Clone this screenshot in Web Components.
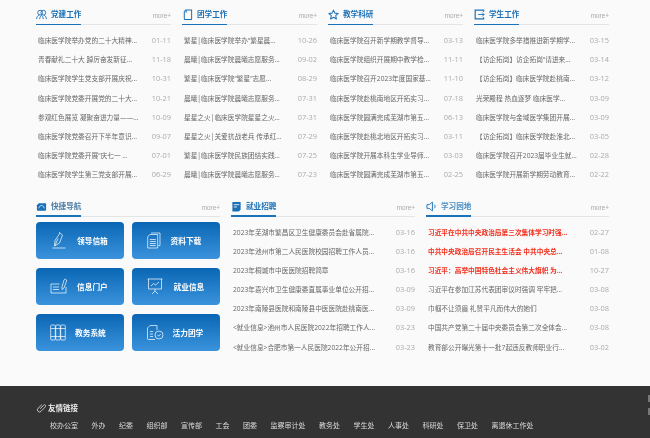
<!DOCTYPE html>
<html lang="zh"><head><meta charset="utf-8">
<style>
html,body{margin:0;padding:0;height:438px;overflow:hidden;background:#fafafa;font-family:"Open Sans","Noto Sans CJK SC",sans-serif}
body{display:flex;flex-direction:column;filter:blur(.3px)}
.top,.mid{display:grid;padding-left:36px}
.top{grid-template-columns:repeat(4,135px);column-gap:11px;padding-top:7px}
.mid{grid-template-columns:184px 184px 183px;column-gap:11px;margin-top:14px}
x-foot{margin-top:auto}
</style></head><body>
<template id="t-panel"><style>
:host{display:block}
.h{display:flex;align-items:flex-start;height:17px;border-bottom:1px solid #e3e5e8;position:relative;gap:4px}
.h::after{content:"";position:absolute;left:0;bottom:-1px;width:45px;height:1.4px;background:#1a73ba}
.ic{width:11px;height:11px;display:flex;flex:none;margin-top:2px}
.t{font-size:7.6px;font-weight:700;color:var(--tc,#1a70b6);line-height:14px;flex:1;white-space:nowrap}
.m{font:6.4px/8px "Liberation Sans",sans-serif;color:#aaa;margin-top:5px}
.b{padding-top:6px}
</style><div class="h"><span class="ic"><slot name="icon"></slot></span><span class="t"><slot name="title"></slot></span><span class="m">more+</span></div><div class="b"><slot></slot></div></template>

<template id="t-row"><style>
:host{display:flex;justify-content:space-between;height:19.2px;line-height:19.2px;padding:0 0 0 2px;font-size:6.7px;color:#666}
:host([red]){color:#f2301e;font-weight:700}
.x{white-space:nowrap;overflow:hidden}
.d{font:7.4px/19.2px "Open Sans",sans-serif;color:#aaa;font-weight:400}
</style><span class="x"><slot></slot></span><span class="d" id="d"></span></template>

<template id="t-tile"><style>
:host{display:flex;align-items:center;height:37px;box-sizing:border-box;border-radius:4px;background:linear-gradient(#0a66b4,#3b93dc);color:#fff;font:700 7.7px "Liberation Serif","Noto Sans CJK SC",serif;padding-left:var(--p);gap:var(--g)}
::slotted(svg){height:17px;flex:none}
</style><slot name="icon"></slot><span><slot></slot></span></template>

<template id="t-foot"><style>
:host{display:block;background:#333;height:52px;color:#ddd;box-sizing:border-box;overflow:hidden;position:relative}
.h{display:flex;align-items:center;gap:2px;padding:14px 0 0 36px;height:16px;font-size:7.5px;font-weight:700;line-height:16px;color:#eee}
.l{display:flex;gap:13.5px;padding:3px 0 0 50px;font-size:7px;line-height:14px;white-space:nowrap}
svg{width:10px;height:10px}
.e{position:absolute;right:0;width:2px;height:7px;background:#777}
</style><div class="h"><svg viewBox="0 0 12 12" fill="none" stroke="#ddd" stroke-width="1"><path d="M5 7 9.500 2.300a1.500 1.500 0 0 1 2 2L6 10a2.500 2.500 0 0 1-3.600-3.600L7 2"/></svg><slot name="title"></slot></div><div class="l"><slot></slot></div><i class="e" style="top:9px"></i><i class="e" style="top:22px"></i></template>

<script>
const def=(n,id)=>customElements.define(n,class extends HTMLElement{constructor(){super();this.attachShadow({mode:'open'}).append(document.getElementById(id).content.cloneNode(true));}connectedCallback(){const d=this.shadowRoot.getElementById('d');if(d)d.textContent=this.getAttribute('date')||'';}});
def('x-panel','t-panel');def('x-row','t-row');def('x-tile','t-tile');def('x-foot','t-foot');
customElements.define('x-grid',class extends HTMLElement{constructor(){super();this.attachShadow({mode:'open'}).innerHTML='<style>:host{display:grid;grid-template-columns:88px 88px;gap:9px 7.500px;margin-top:-1px}</style><slot></slot>';}});
</script>

<div class="top">
<x-panel><svg slot="icon" viewBox="0 0 12 12" fill="none" stroke="#1a70b6" stroke-width="1"><circle cx="4.500" cy="4" r="2.600"/><circle cx="8" cy="4" r="2.600"/><path d="M.6 11c.2-2.500 1.500-4 3-4.300M11.400 11c-.2-2.500-1.500-4-3-4.300M4 11c.2-2 1-3.500 2-4 1 .5 1.800 2 2 4"/></svg><span slot="title">党建工作</span>
<x-row date="01-11">临床医学院举办党的二十大精神...</x-row><x-row date="11-18">青春献礼二十大 踔厉奋发新征...</x-row><x-row date="10-31">临床医学院学生党支部开展庆祝...</x-row><x-row date="10-21">临床医学院党委开展党的二十大...</x-row><x-row date="10-09">参观红色展览 凝聚奋进力量——...</x-row><x-row date="09-07">临床医学院党委召开下半年意识...</x-row><x-row date="07-01">临床医学院党委开展“庆七一 ...</x-row><x-row date="06-29">临床医学院学生第三党支部开展...</x-row></x-panel>
<x-panel><svg slot="icon" viewBox="0 0 12 12" fill="none" stroke="#1a70b6" stroke-width="1.100"><path d="M2.500 2.500V10.500A1 1 0 0 0 3.500 11.500H9.500A1 1 0 0 0 10.500 10.500V1H4.500v3"/><path d="M2.500 2.500 4.500 1"/></svg><span slot="title">团学工作</span>
<x-row date="10-26">繁星|临床医学院举办“繁星晨...</x-row><x-row date="09-02">晨曦|临床医学院晨曦志愿服务...</x-row><x-row date="08-29">繁星|临床医学院“繁星”志愿...</x-row><x-row date="07-31">晨曦|临床医学院晨曦志愿服务...</x-row><x-row date="07-31">星星之火|临床医学院星星之火...</x-row><x-row date="07-29">星星之火|关爱抗战老兵 传承红...</x-row><x-row date="07-25">繁星|临床医学院民族团结实践...</x-row><x-row date="07-23">晨曦|临床医学院晨曦志愿服务...</x-row></x-panel>
<x-panel><svg slot="icon" viewBox="0 0 12 12" fill="none" stroke="#1a70b6" stroke-width="1.100" stroke-linejoin="round"><path d="M6 1.200 7.500 4.500l3.700.4-2.800 2.400.8 3.600L6 9l-3.200 1.900.8-3.600L.8 4.900l3.700-.4z"/></svg><span slot="title">教学科研</span>
<x-row date="03-13">临床医学院召开新学期教学督导...</x-row><x-row date="11-11">临床医学院组织开展期中教学检...</x-row><x-row date="11-10">临床医学院召开2023年度国家基...</x-row><x-row date="07-18">临床医学院赴桃南地区开拓实习...</x-row><x-row date="06-13">临床医学院圆满完成芜湖市第五...</x-row><x-row date="03-11">临床医学院赴桃北地区开拓实习...</x-row><x-row date="03-03">临床医学院开展本科生学业导师...</x-row><x-row date="02-25">临床医学院圆满完成芜湖市第五...</x-row></x-panel>
<x-panel><svg slot="icon" viewBox="0 0 12 12" fill="none" stroke="#1a70b6" stroke-width="1.300"><path d="M10.500 3V1.300H1.300V10.700H10.500V9"/><path d="M4.500 6H11M8.800 3.800 11 6 8.800 8.200" stroke-width="1"/></svg><span slot="title">学生工作</span>
<x-row date="03-15">临床医学院多举措推进新学期学...</x-row><x-row date="03-14">【访企拓岗】访企拓岗“请进来...</x-row><x-row date="03-12">【访企拓岗】临床医学院赴桃南...</x-row><x-row date="03-09">光荣殿程 热血逐梦 临床医学...</x-row><x-row date="03-09">临床医学院与金域医学集团开展...</x-row><x-row date="03-05">【访企拓岗】临床医学院赴淮北...</x-row><x-row date="02-28">临床医学院召开2023届毕业生就...</x-row><x-row date="02-22">临床医学院开展新学期劳动教育...</x-row></x-panel>
</div>
<div class="mid">
<x-panel style="--tc:#4d7ea6"><svg slot="icon" viewBox="0 0 12 12"><path fill="#1a70b6" d="M1 4.500 3 2.500h7a1 1 0 0 1 1 1v6a1 1 0 0 1-1 1H2a1 1 0 0 1-1-1z"/><path fill="none" stroke="#fff" stroke-width=".8" d="M3 8c.5-2 1.500-3 3-3s2.500 1 3 3"/></svg><span slot="title">快捷导航</span>
<x-grid>
<x-tile style="--p:16px;--g:11px"><svg slot="icon" width="14" viewBox="0 0 14 17" fill="none" stroke="#fff" stroke-width=".7"><path d="M8 1 10.500 3 7.500 11 2.500 14 3 8.500z"/><path d="M6 6.500 3 13.500M.5 16h13M7 1l1-1"/></svg>领导信箱</x-tile>
<x-tile style="--p:15px;--g:10px"><svg slot="icon" width="14" viewBox="0 0 14 17" fill="none" stroke="#fff" stroke-width=".7"><path d="M4 1H13V13.500H11.500M.7 4.500 3 2.500H10.700V16H.7z"/><path d="M2.800 7.500h6M2.800 9.500h6M2.800 11.500h6M2.800 13.500h6"/></svg>资料下载</x-tile>
<x-tile style="--p:14px;--g:10px"><svg slot="icon" width="17" viewBox="0 0 17 17" fill="none" stroke="#fff" stroke-width=".7"><path d="M9.500 6H1v9h15V9M3 9h6M3 11.500h6"/><path d="M12 9 14 2a1.400 1.400 0 0 1 2.600 1L14 10l-2 1.500z"/></svg>信息门户</x-tile>
<x-tile style="--p:15px;--g:11px"><svg slot="icon" width="16" viewBox="0 0 16 17" fill="none" stroke="#fff" stroke-width=".7"><path d="M.5 1h15M1.500 1v10h13V1M8 11v2M5 16l3-3 3 3"/><path d="M4 8l2.500-2.500 2 1.500L12 4"/></svg>就业信息</x-tile>
<x-tile style="--p:14px;--g:9px"><svg slot="icon" width="16" viewBox="0 0 16 17" fill="none" stroke="#fff" stroke-width=".7"><rect x=".7" y="1" width="4.600" height="15" rx="1"/><rect x="5.700" y="1" width="4.600" height="15" rx="1"/><rect x="10.700" y="1" width="4.600" height="15" rx="1"/><path d="M.7 4.500h14.600M.7 12.500h14.600"/></svg>教务系统</x-tile>
<x-tile style="--p:14px;--g:9px"><svg slot="icon" width="18" viewBox="0 0 18 17" fill="none" stroke="#fff" stroke-width=".7"><path d="M1.500 4 4 1.500H11V6M1.500 4V14.500a1 1 0 0 0 1 1H9"/><path d="M4 7.500h3M4 10h3M4 12.500h3"/><circle cx="13" cy="11" r="4"/><path d="M11.500 11l1.200 1.200 2-2.200"/></svg>活力团学</x-tile>
</x-grid></x-panel>
<x-panel><svg slot="icon" viewBox="0 0 12 12"><path fill="#1a70b6" d="M1.500 1h9v8.500L8.500 11.500H1.500z"/><path stroke="#fff" stroke-width=".9" d="M3 4h6M3 6.500h3.500"/></svg><span slot="title">就业招聘</span>
<x-row date="03-16">2023年芜湖市繁昌区卫生健康委员会赴省属院...</x-row><x-row date="03-16">2023年池州市第二人民医院校园招聘工作人员...</x-row><x-row date="03-16">2023年桐城市中医医院招聘简章</x-row><x-row date="03-09">2023年嘉兴市卫生健康委直属事业单位公开招...</x-row><x-row date="03-09">2023年南陵县医院和南陵县中医医院赴桃南医...</x-row><x-row date="03-23">&lt;就业信息&gt;池州市人民医院2022年招聘工作人...</x-row><x-row date="03-23">&lt;就业信息&gt;合肥市第一人民医院2022年公开招...</x-row></x-panel>
<x-panel style="--tc:#4d8fc4"><svg slot="icon" viewBox="0 0 12 12" fill="none" stroke="#1a70b6" stroke-width="1"><path d="M1 4v4h2.500L7 10.800V1.200L3.500 4zM9 4c1.200 1 1.200 3 0 4"/></svg><span slot="title">学习园地</span>
<x-row red date="02-27">习近平在中共中央政治局第三次集体学习时强...</x-row><x-row red date="01-08">中共中央政治局召开民主生活会 中共中央总...</x-row><x-row red date="10-27">习近平：高举中国特色社会主义伟大旗帜 为...</x-row><x-row date="03-08">习近平在参加江苏代表团审议时强调 牢牢把...</x-row><x-row date="03-08">巾帼不让须眉 礼赞平凡而伟大的她们</x-row><x-row date="03-08">中国共产党第二十届中央委员会第二次全体会...</x-row><x-row date="03-02">教育部公开曝光第十一批7起违反教师职业行...</x-row></x-panel>
</div>
<x-foot><span slot="title">友情链接</span><span>校办公室</span><span>外办</span><span>纪委</span><span>组织部</span><span>宣传部</span><span>工会</span><span>团委</span><span>监察审计处</span><span>教务处</span><span>学生处</span><span>人事处</span><span>科研处</span><span>保卫处</span><span>离退休工作处</span></x-foot>
</body></html>
